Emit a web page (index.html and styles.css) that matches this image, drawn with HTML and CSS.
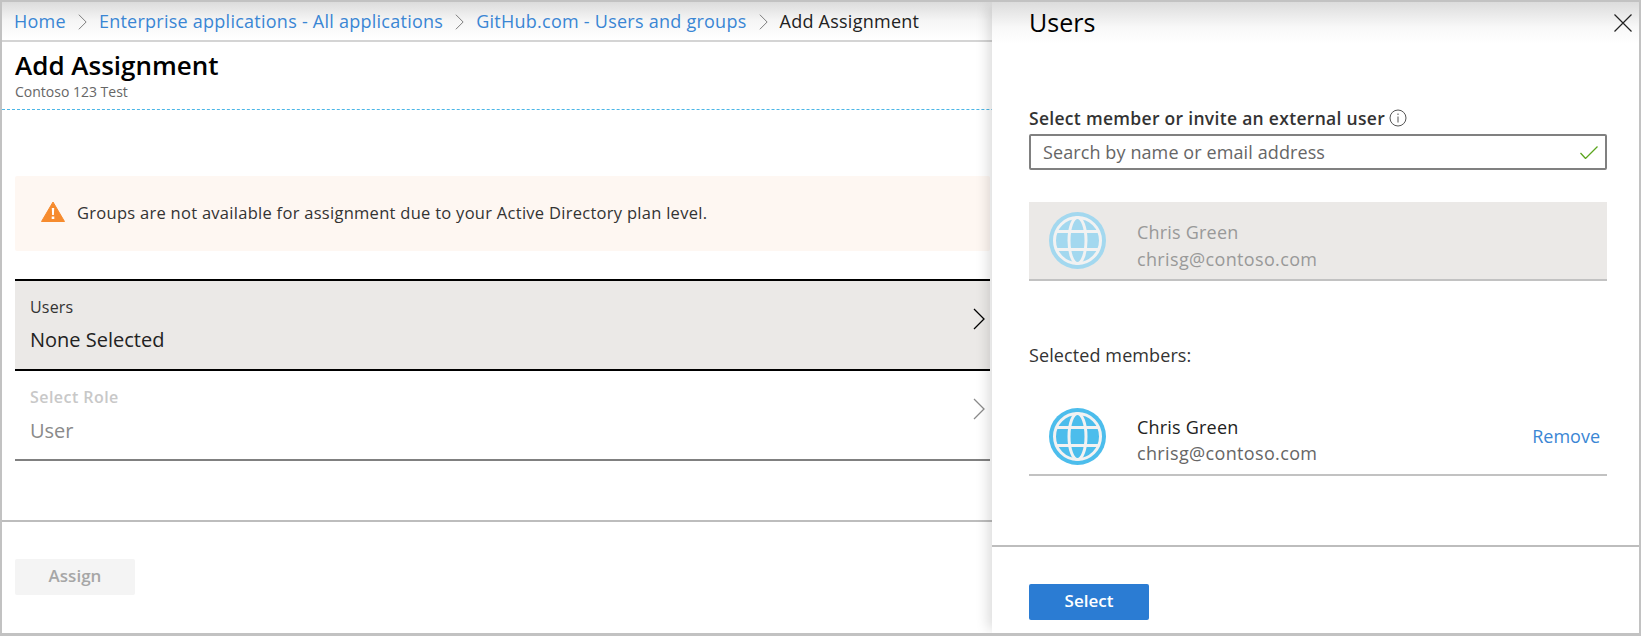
FILE: index.html
```html
<!DOCTYPE html>
<html lang="en">
<head>
  <meta charset="UTF-8" />
  <title>Add Assignment</title>
  <link rel="stylesheet" href="styles.css">
</head>
<body>
  <svg class="defs" width="0" height="0">
    <symbol id="globe" viewBox="0 0 57 57">
      <circle cx="28.5" cy="28.5" r="28.5" fill="currentColor" />
      <g fill="none" stroke="#f2f2f2" stroke-width="3">
        <circle cx="28.5" cy="28.5" r="23" />
        <ellipse cx="28.5" cy="28.5" rx="8.5" ry="23" />
        <path d="M7 19.5H50M7 37.5H50" />
      </g>
    </symbol>
    <symbol id="chevron" viewBox="0 0 12 22">
      <path d="M1 1L11 11L1 21" fill="none" stroke="currentColor" stroke-width="1.3" />
    </symbol>
  </svg>

  <div class="frame">
    <nav class="crumbs">
      <a href="#">Home</a>
      <svg class="crumb-sep"><use href="#chevron" /></svg>
      <a href="#">Enterprise applications - All applications</a>
      <svg class="crumb-sep"><use href="#chevron" /></svg>
      <a href="#">GitHub.com - Users and groups</a>
      <svg class="crumb-sep"><use href="#chevron" /></svg>
      <span class="crumb-current">Add Assignment</span>
    </nav>

    <header class="page-head">
      <h1>Add Assignment</h1>
      <p>Contoso 123 Test</p>
    </header>

    <main class="content">
      <div class="alert">
        <svg class="alert-icon" viewBox="0 0 24 21">
          <path d="M12 1L23.5 20.5H.5Z" fill="#f68b2e" stroke="#f68b2e" stroke-linejoin="round" />
          <path d="M10.8 7h2.4l-.3 7h-1.8zM10.7 15.5h2.6v2.6h-2.6z" fill="#fff" />
        </svg>
        <span>Groups are not available for assignment due to your Active Directory plan level.</span>
      </div>

      <div class="pick-row is-active">
        <div>
          <div class="pick-label">Users</div>
          <div class="pick-value">None Selected</div>
        </div>
        <svg class="pick-arrow"><use href="#chevron" /></svg>
      </div>
      <div class="pick-row is-disabled">
        <div>
          <div class="pick-label">Select Role</div>
          <div class="pick-value">User</div>
        </div>
        <svg class="pick-arrow"><use href="#chevron" /></svg>
      </div>
    </main>

    <footer class="page-foot">
      <button class="btn btn-off">Assign</button>
    </footer>

    <aside class="blade">
      <div class="blade-head">
        <h2>Users</h2>
        <svg class="close" viewBox="0 0 18 18">
          <path d="M.5.5L17.5 17.5M17.5.5L.5 17.5" fill="none" stroke="#222" stroke-width="1.2" />
        </svg>
      </div>

      <div class="blade-body">
        <label class="search-label" for="search">Select member or invite an external user
          <svg class="info" viewBox="0 0 18 18">
            <circle cx="9" cy="9" r="8" fill="none" stroke="#555" />
            <path d="M9 7.5V13.5M9 4.5V6" fill="none" stroke="#555" />
          </svg>
        </label>
        <div class="search-box">
          <input id="search" type="text" placeholder="Search by name or email address" />
          <svg class="check" viewBox="0 0 18 13">
            <path d="M.5 7L5.5 12.5L17.5.5" fill="none" stroke="#5ba51e" stroke-width="1.3" />
          </svg>
        </div>

        <div class="member is-picked">
          <svg class="globe"><use href="#globe" /></svg>
          <div class="member-text">
            <div>Chris Green</div>
            <div class="member-mail">chrisg@contoso.com</div>
          </div>
        </div>

        <div class="selected-title">Selected members:</div>

        <div class="member">
          <svg class="globe"><use href="#globe" /></svg>
          <div class="member-text">
            <div>Chris Green</div>
            <div class="member-mail">chrisg@contoso.com</div>
          </div>
          <a class="remove" href="#">Remove</a>
        </div>
      </div>

      <div class="blade-foot">
        <button class="btn btn-primary">Select</button>
      </div>
    </aside>
  </div>
</body>
</html>
```

FILE: styles.css
```css
* {
  box-sizing: border-box;
}
body {
  margin: 0;
  background: #fff;
  font-family: "Open Sans", "Noto Sans", Arial, sans-serif;
  color: #222;
  overflow: hidden;
}
a {
  color: #3a86d4;
  text-decoration: none;
}
.defs {
  display: block;
  height: 0;
}
.frame {
  position: relative;
  display: flex;
  flex-direction: column;
  height: 636px;
  border: 2px solid #c2c2c2;
  border-bottom-width: 3px;
  background: #fff;
  overflow: hidden;
}

/* breadcrumb */
.crumbs {
  display: flex;
  align-items: center;
  flex: none;
  height: 40px;
  padding-left: 12px;
  border-bottom: 2px solid #d4d4d4;
  background: linear-gradient(#dcdcdc, #f6f6f6 50%, #fff);
  font-size: 18px;
  letter-spacing: 0.25px;
  white-space: nowrap;
}
.crumb-sep {
  width: 9px;
  height: 16px;
  margin: 2px 12px 0;
  color: #777;
}
.crumb-current {
  color: #222;
}

/* title */
.page-head {
  flex: none;
  height: 68px;
  padding: 7px 0 0 13px;
  border-bottom: 1px dashed #4db6e6;
}
.page-head h1 {
  margin: 0 0 2px;
  font-size: 26px;
  line-height: 32px;
  font-weight: 600;
  color: #000;
}
.page-head p {
  margin: 0;
  font-size: 14px;
  line-height: 18px;
  color: #666;
}

/* left content */
.content {
  flex: none;
  width: 988px;
  height: 410px;
  padding: 66px 0 0 13px;
}
.alert {
  display: flex;
  align-items: center;
  gap: 12px;
  height: 75px;
  margin-bottom: 28px;
  padding: 0 0 3px 26px;
  border-radius: 2px;
  background: #fef7f2;
  font-size: 16.5px;
  letter-spacing: 0.28px;
  color: #333;
}
.alert-icon {
  width: 24px;
  height: 21px;
  margin-bottom: 2px;
}
.pick-row {
  display: flex;
  align-items: center;
  justify-content: space-between;
  height: 92px;
  padding: 0 5px 2px 15px;
  border-top: 2px solid #000;
  border-bottom: 2px solid #000;
}
.pick-row.is-active {
  background: #ebe9e7;
}
.pick-row.is-disabled {
  height: 90px;
  border-top: none;
  border-bottom-color: #808080;
}
.pick-label {
  font-size: 16px;
  line-height: 24px;
  letter-spacing: 0.2px;
  color: #333;
}
.pick-value {
  margin-top: 8px;
  font-size: 20px;
  line-height: 26px;
  color: #222;
}
.is-disabled .pick-label {
  font-weight: 600;
  letter-spacing: 0.45px;
  color: #c8c8c8;
}
.is-disabled .pick-value {
  margin-top: 9px;
  color: #8a8a8a;
}
.pick-arrow {
  width: 12px;
  height: 22px;
  margin-bottom: 10px;
  color: #000;
}
.is-disabled .pick-arrow {
  color: #8a8a8a;
}

/* footers */
.page-foot {
  flex: 1;
  padding: 37px 0 0 13px;
  border-top: 2px solid #bdbdbd;
}
.btn {
  display: block;
  width: 120px;
  height: 36px;
  padding: 0 0 3px;
  border: none;
  border-radius: 2px;
  font-family: inherit;
  font-size: 17px;
  font-weight: 600;
}
.btn-off {
  background: #f4f4f4;
  color: #a6a6a6;
}
.btn-primary {
  background: #2b7cd3;
  color: #fff;
}

/* side blade, sits over the page */
.blade {
  position: absolute;
  top: 0;
  right: 0;
  bottom: 0;
  left: 990px;
  display: flex;
  flex-direction: column;
  background: #fff;
  box-shadow: -8px 0 12px -4px rgba(0, 0, 0, 0.14);
}
.blade-head {
  display: flex;
  align-items: center;
  justify-content: space-between;
  flex: none;
  height: 42px;
  padding: 0 7px 2px 37px;
  background: linear-gradient(#dcdcdc, #f8f8f8 60%, #fff);
}
.blade-head h2 {
  margin: 0;
  font-size: 25px;
  font-weight: 400;
  color: #000;
}
.close {
  width: 18px;
  height: 18px;
  margin-top: 1px;
}
.blade-body {
  flex: none;
  height: 503px;
  padding: 60px 32px 0 37px;
  border-bottom: 2px solid #bdbdbd;
}
.search-label {
  display: flex;
  align-items: center;
  gap: 4px;
  height: 28px;
  font-size: 17.5px;
  font-weight: 600;
  letter-spacing: 0.3px;
  color: #333;
}
.info {
  width: 18px;
  height: 18px;
}
.search-box {
  display: flex;
  align-items: center;
  height: 36px;
  margin-top: 2px;
  padding: 0 7px 0 12px;
  border: 2px solid #808080;
  border-radius: 2px;
}
.search-box input {
  flex: 1;
  min-width: 0;
  border: none;
  outline: none;
  padding: 0;
  font-family: inherit;
  font-size: 18px;
  letter-spacing: 0.1px;
}
.search-box input::placeholder {
  color: #666;
  opacity: 1;
}
.check {
  width: 18px;
  height: 13px;
}
.member {
  display: flex;
  align-items: center;
  height: 78px;
  padding: 0 7px 0 20px;
  border-bottom: 2px solid #c2c2c2;
  color: #222;
}
.member.is-picked {
  height: 79px;
  margin-top: 32px;
  background: #ebe9e7;
  color: #999;
}
.globe {
  flex: none;
  width: 57px;
  height: 57px;
  color: #4cbdec;
}
.is-picked .globe {
  color: #a3d8ef;
}
.member-text {
  flex: 1;
  margin-left: 31px;
  padding-top: 8px;
  font-size: 18px;
  line-height: 26.5px;
  letter-spacing: 0.2px;
}
.is-picked .member-text {
  padding-top: 10px;
}
.member-mail {
  letter-spacing: 0.35px;
  color: #666;
}
.is-picked .member-mail {
  color: #999;
}
.remove {
  font-size: 18px;
}
.selected-title {
  height: 24px;
  margin: 62px 0 31px;
  font-size: 18px;
  line-height: 24px;
  letter-spacing: 0.1px;
  color: #333;
}
.blade-foot {
  flex: 1;
  padding: 37px 0 0 37px;
}
```
